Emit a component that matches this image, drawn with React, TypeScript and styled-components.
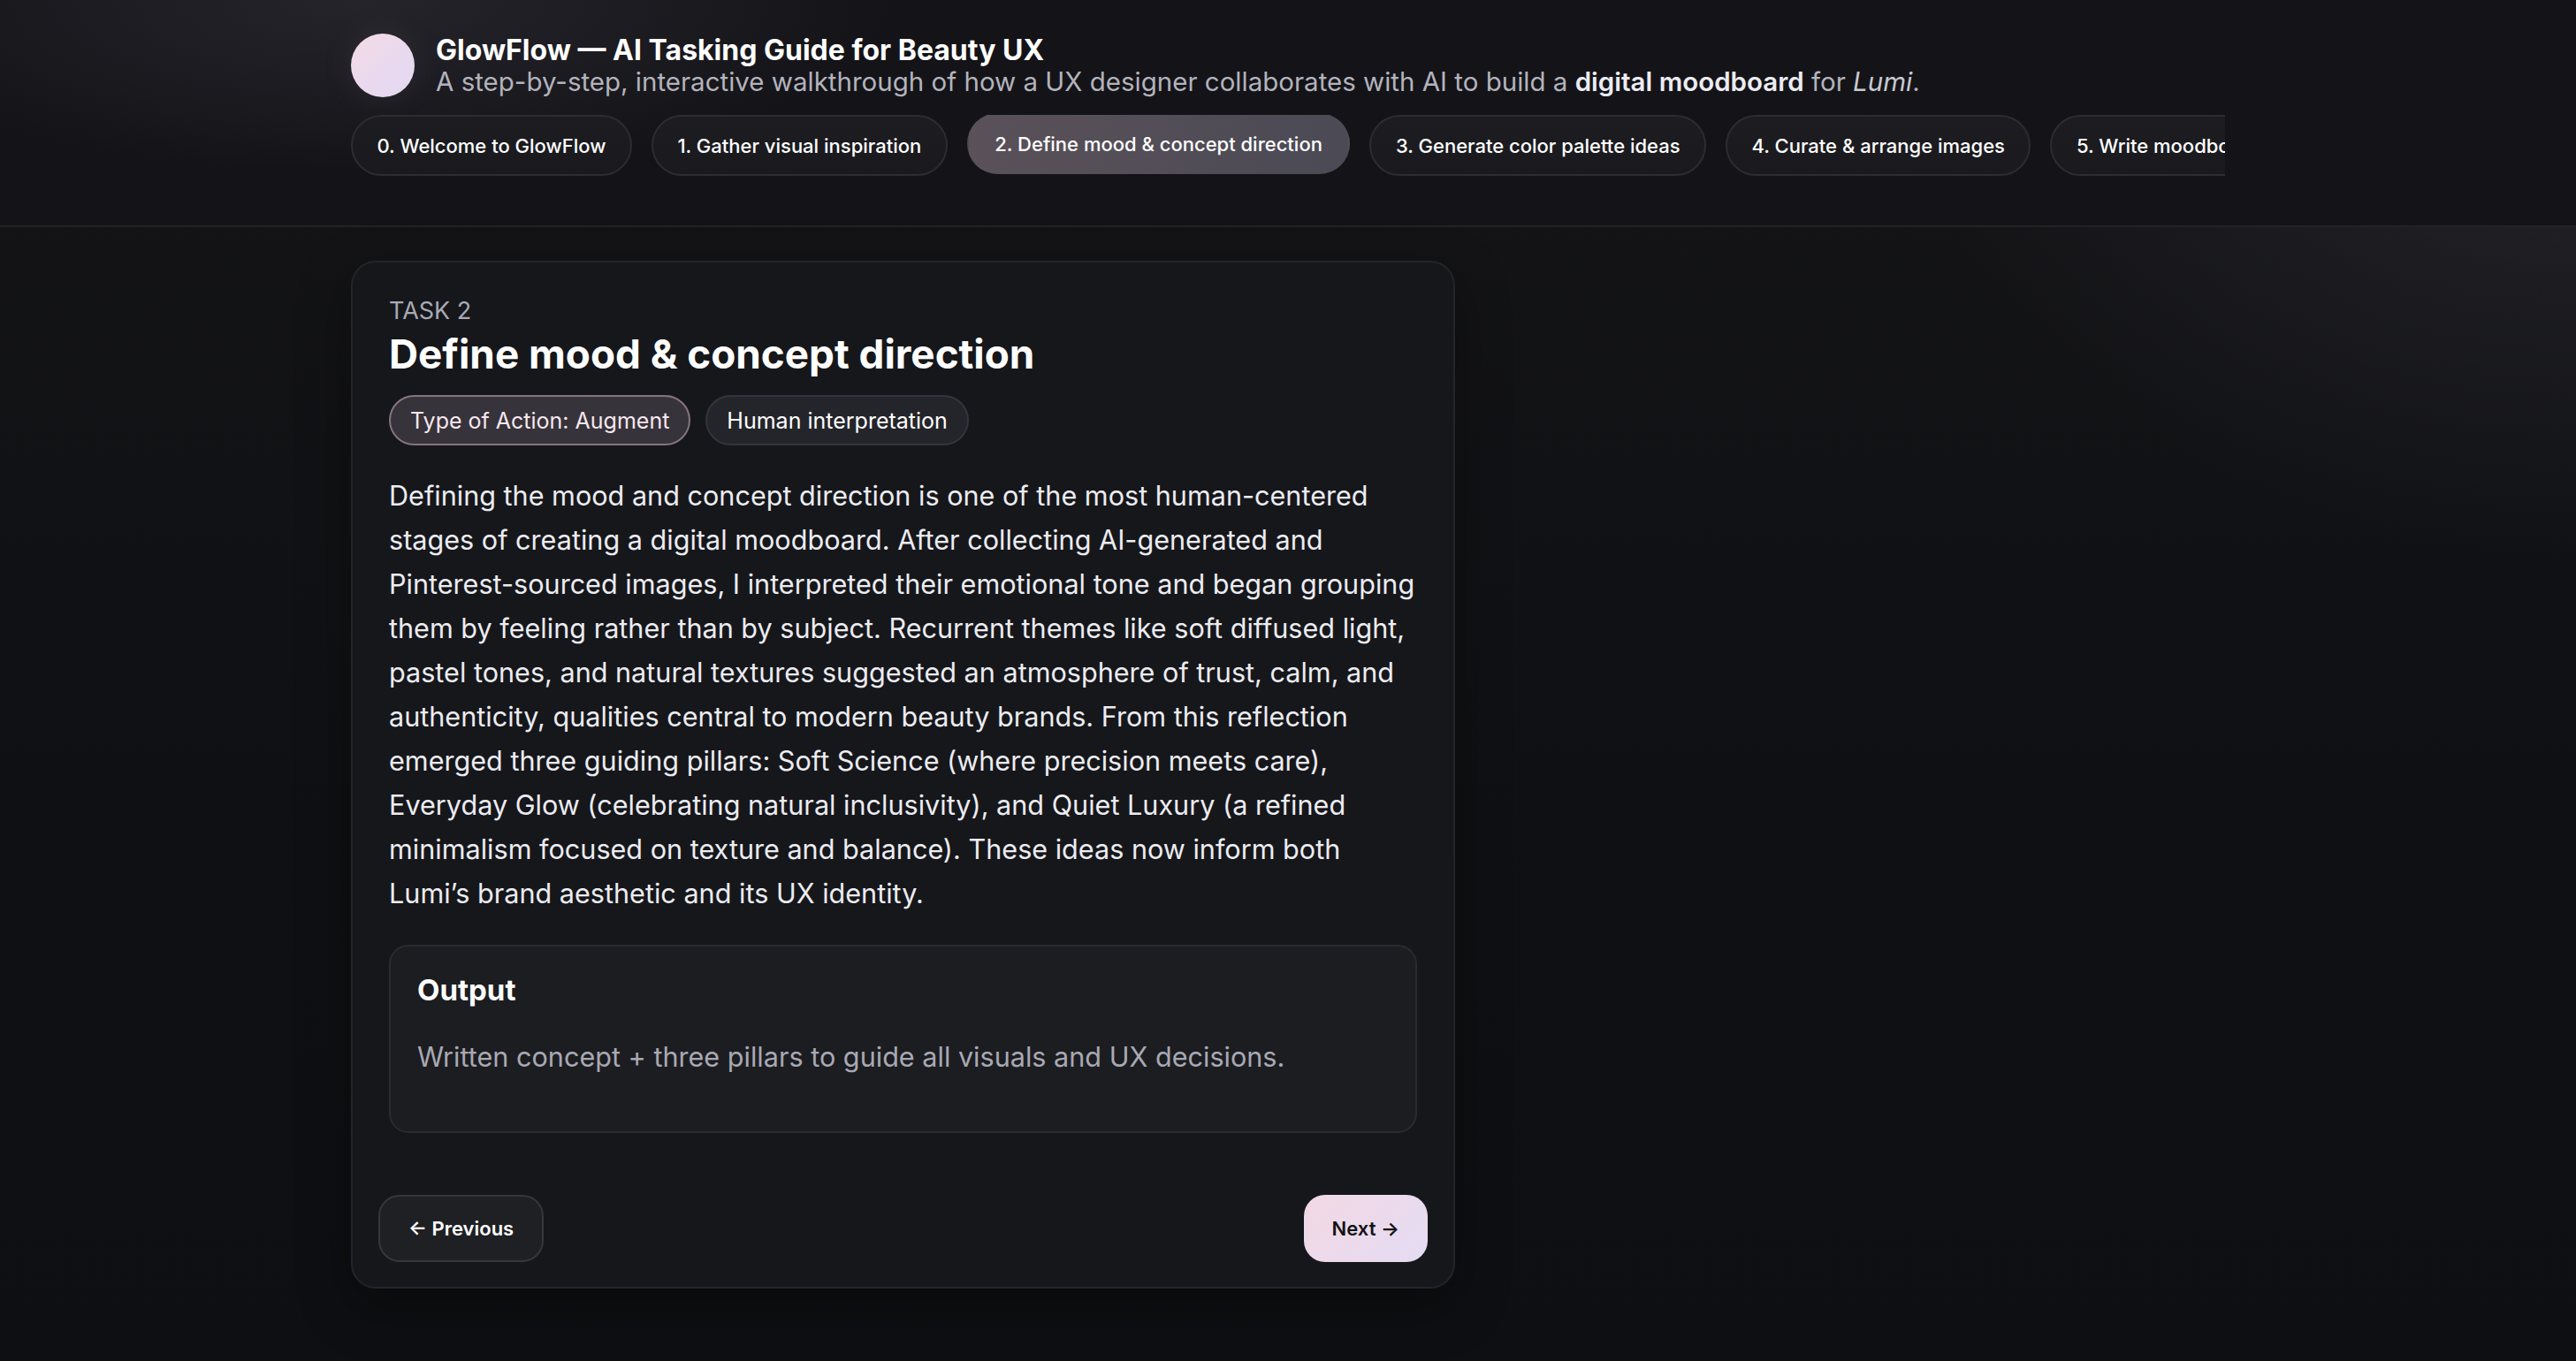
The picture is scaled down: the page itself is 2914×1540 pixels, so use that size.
import React from "react";
import styled, { createGlobalStyle } from "styled-components";

const GlobalStyle = createGlobalStyle`
  html, body {
    margin: 0;
    padding: 0;
  }
  body {
    min-height: 100vh;
    background-color: #0f1013;
    background-image:
      radial-gradient(ellipse 1100px 900px at 100% 0%, rgba(46, 46, 52, 0.75), rgba(46, 46, 52, 0) 70%),
      linear-gradient(180deg, #151518 0%, #0f1013 60%, #0e0f12 100%);
    font-family: Inter, "Noto Sans", "Liberation Sans", sans-serif;
    color: #f2f2f5;
    -webkit-font-smoothing: antialiased;
  }
  * { box-sizing: border-box; }
`;

const Page = styled.div`
  min-height: 100vh;
  display: flex;
  flex-direction: column;
`;

const HeaderBar = styled.header`
  background-color: #141418;
  background-image: radial-gradient(ellipse 800px 260px at 14% 0%, rgba(42, 40, 48, 0.8), rgba(42, 40, 48, 0) 75%);
  border-bottom: 2px solid #222227;
`;

const Container = styled.div`
  width: 2120px;
  margin: 0 auto;
`;

const HeaderInner = styled(Container)`
  padding: 38px 0 56px;
`;

const Brand = styled.div`
  display: flex;
  align-items: center;
  gap: 24px;
`;

const Logo = styled.div`
  width: 72px;
  height: 72px;
  border-radius: 50%;
  flex: 0 0 auto;
  background: linear-gradient(135deg, #f4dbe5 0%, #e9d9ef 55%, #e3d9f1 100%);
  box-shadow: 0 0 40px rgba(240, 215, 235, 0.08);
`;

const TitleBlock = styled.div`
  display: flex;
  flex-direction: column;
`;

const Title = styled.h1`
  margin: 0;
  font-size: 32px;
  line-height: 37px;
  font-weight: 700;
  color: #ffffff;
`;

const Subtitle = styled.p`
  margin: 0;
  font-size: 29.5px;
  line-height: 35px;
  color: #b3b3bd;
  strong { color: #ececf2; font-weight: 600; }
  em { color: #c9c9d2; font-style: italic; }
`;

const Tabs = styled.nav`
  margin-top: 20px;
  display: flex;
  gap: 22px;
  overflow: hidden;
  align-items: center;
`;

const Tab = styled.button<{ $active?: boolean }>`
  flex: 0 0 auto;
  height: 69px;
  padding: 0 ${(p) => (p.$active ? "29.5px" : "27.5px")};
  border-radius: 999px;
  font-family: inherit;
  font-size: 22px;
  font-weight: 500;
  color: #ffffff;
  white-space: nowrap;
  cursor: pointer;
  border: 2px solid ${(p) => (p.$active ? "transparent" : "#2c2c31")};
  background: ${(p) =>
    p.$active
      ? "linear-gradient(90deg, #5a5159 0%, #4b4a55 100%)"
      : "linear-gradient(180deg, #1d1d21 0%, #1a1a1e 100%)"};
  transform: ${(p) => (p.$active ? "translateY(-2px)" : "none")};
`;

const Main = styled(Container)`
  padding: 38px 0 80px;
`;

const Card = styled.section`
  width: 1249px;
  background: #16171b;
  border: 2px solid #24252a;
  border-radius: 28px;
  padding: 38px 29px 28px;
  box-shadow: 0 20px 60px rgba(0, 0, 0, 0.35);
`;

const CardBody = styled.div`
  padding: 0 12px;
`;

const TaskLabel = styled.div`
  font-size: 27px;
  line-height: 34px;
  color: #a9a9b4;
`;

const TaskTitle = styled.h2`
  margin: 5px 0 0;
  font-size: 45.8px;
  line-height: 54px;
  font-weight: 700;
  color: #ffffff;
`;

const Chips = styled.div`
  display: flex;
  gap: 17px;
  margin-top: 19px;
`;

const Chip = styled.span<{ $accent?: boolean }>`
  display: inline-flex;
  align-items: center;
  height: 57px;
  padding: 0 22px;
  border-radius: 999px;
  font-size: 25px;
  color: ${(p) => (p.$accent ? "#f6e7ef" : "#ffffff")};
  background: ${(p) => (p.$accent ? "#37333a" : "#24252a")};
  border: 2px solid ${(p) => (p.$accent ? "#85747f" : "#34353b")};
`;

const Paragraph = styled.p`
  margin: 32px 0 0;
  font-size: 30.6px;
  line-height: 50px;
  color: #ececf1;
`;

const OutputBox = styled.div`
  margin-top: 33px;
  background: #1c1d21;
  border: 2px solid #2a2b30;
  border-radius: 22px;
  padding: 30px 30px 0;
`;

const OutputTitle = styled.h3`
  margin: 0;
  font-size: 33px;
  line-height: 39px;
  font-weight: 700;
  color: #ffffff;
`;

const OutputText = styled.p`
  margin: 31px 0 0;
  padding-bottom: 59px;
  font-size: 30.6px;
  line-height: 50px;
  color: #a9a9b3;
`;

const NavRow = styled.div`
  margin-top: 70px;
  display: flex;
  justify-content: space-between;
  align-items: center;
`;

const NavButton = styled.button<{ $primary?: boolean }>`
  height: 76px;
  padding: 0 ${(p) => (p.$primary ? "30px" : "32px")};
  border-radius: 24px;
  font-family: inherit;
  font-size: 22px;
  font-weight: 600;
  cursor: pointer;
  color: ${(p) => (p.$primary ? "#121216" : "#ffffff")};
  border: 2px solid ${(p) => (p.$primary ? "transparent" : "#36363c")};
  background: ${(p) =>
    p.$primary ? "linear-gradient(135deg, #f3d8e3 0%, #e4dcf4 100%)" : "#1f2024"};
`;

const tabs = [
  "0. Welcome to GlowFlow",
  "1. Gather visual inspiration",
  "2. Define mood & concept direction",
  "3. Generate color palette ideas",
  "4. Curate & arrange images",
  "5. Write moodboard narrative",
  "6. Share & gather feedback",
];

export default function App() {
  return (
    <>
      <GlobalStyle />
      <Page>
        <HeaderBar>
          <HeaderInner>
            <Brand>
              <Logo />
              <TitleBlock>
                <Title>GlowFlow — AI Tasking Guide for Beauty UX</Title>
                <Subtitle>
                  A step-by-step, interactive walkthrough of how a UX designer collaborates with AI to
                  build a <strong>digital moodboard</strong> for <em>Lumi</em>.
                </Subtitle>
              </TitleBlock>
            </Brand>
            <Tabs>
              {tabs.map((t, i) => (
                <Tab key={t} $active={i === 2}>
                  {t}
                </Tab>
              ))}
            </Tabs>
          </HeaderInner>
        </HeaderBar>
        <Main>
          <Card>
            <CardBody>
              <TaskLabel>TASK 2</TaskLabel>
              <TaskTitle>Define mood &amp; concept direction</TaskTitle>
              <Chips>
                <Chip $accent>Type of Action: Augment</Chip>
                <Chip>Human interpretation</Chip>
              </Chips>
              <Paragraph>
                Defining the mood and concept direction is one of the most human-centered stages of
                creating a digital moodboard. After collecting AI-generated and Pinterest-sourced
                images, I interpreted their emotional tone and began grouping them by feeling rather
                than by subject. Recurrent themes like soft diffused light, pastel tones, and natural
                textures suggested an atmosphere of trust, calm, and authenticity, qualities central
                to modern beauty brands. From this reflection emerged three guiding pillars: Soft
                Science (where precision meets care), Everyday Glow (celebrating natural inclusivity),
                and Quiet Luxury (a refined minimalism focused on texture and balance). These ideas
                now inform both Lumi’s brand aesthetic and its UX identity.
              </Paragraph>
              <OutputBox>
                <OutputTitle>Output</OutputTitle>
                <OutputText>Written concept + three pillars to guide all visuals and UX decisions.</OutputText>
              </OutputBox>
            </CardBody>
            <NavRow>
              <NavButton>← Previous</NavButton>
              <NavButton $primary>Next →</NavButton>
            </NavRow>
          </Card>
        </Main>
      </Page>
    </>
  );
}
